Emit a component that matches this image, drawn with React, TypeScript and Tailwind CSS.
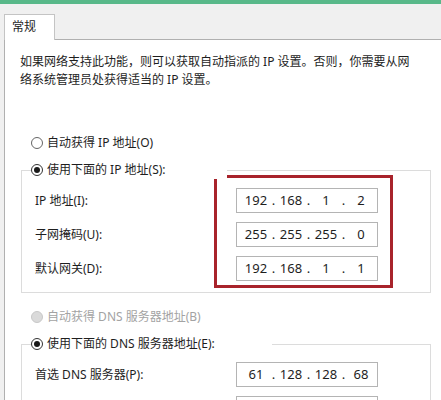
import React from "react";

const FONT = { fontFamily: '"Noto Sans", "Noto Sans CJK SC", sans-serif' };

type RadioState = "off" | "on" | "disabled";

function Radio({ state }: { state: RadioState }) {
  if (state === "disabled") {
    return <span className="w-[12px] h-[12px] rounded-full border border-[#c8c8c8] bg-[#dadada] shrink-0" />;
  }
  return (
    <span
      className={`w-[12px] h-[12px] rounded-full border bg-white shrink-0 flex items-center justify-center ${
        state === "on" ? "border-[#333]" : "border-[#666]"
      }`}
    >
      {state === "on" && <span className="w-[6px] h-[6px] rounded-full bg-[#1a1a1a]" />}
    </span>
  );
}

function RadioRow({ state, label }: { state: RadioState; label: string }) {
  return (
    <div
      className={`flex items-center h-[18px] gap-[4px] text-[12px] whitespace-nowrap ${
        state === "disabled" ? "text-[#a3a3a3]" : "text-[#1e1e1e]"
      }`}
    >
      <Radio state={state} />
      <span>{label}</span>
    </div>
  );
}

// parts empty -> blank box (only its top edge is in view)
function IpBox({ parts }: { parts?: string[] }) {
  return (
    <div className="w-[142px] h-[25px] border border-[#b4b4b4] bg-white flex items-center pl-[5px] text-[13px] text-[#1e1e1e]">
      {parts?.map((p, i) => (
        <React.Fragment key={i}>
          {i > 0 && <span className="w-[7px] text-center">.</span>}
          <span className="w-[28px] text-center">{p}</span>
        </React.Fragment>
      ))}
    </div>
  );
}

function FieldLabel({ children }: { children: React.ReactNode }) {
  return <div className="h-[25px] flex items-center text-[12px] text-[#1e1e1e] whitespace-nowrap">{children}</div>;
}

export default function App() {
  return (
    <div className="w-[441px] h-[400px] overflow-hidden bg-[#f0f0f0] flex flex-col" style={FONT}>
      <div className="h-[4px] bg-[#58b889] shrink-0" />

      {/* tab strip */}
      <div className="flex pl-[4px] pt-[10px] shrink-0">
        <div className="relative z-10 -mb-px w-[51px] h-[26px] border border-b-0 border-[#c4c4c4] bg-white pl-[7px] text-[12px] leading-[24px] text-[#1e1e1e]">
          常规
        </div>
      </div>

      {/* tab page */}
      <div className="flex-1 ml-[4px] bg-white border-l border-t border-[#b0b0b0] pt-[13px]">
        <div className="pl-[15px] text-[12px] leading-[18px] text-[#1e1e1e] whitespace-nowrap">
          <div>如果网络支持此功能，则可以获取自动指派的 IP 设置。否则，你需要从网</div>
          <div>络系统管理员处获得适当的 IP 设置。</div>
        </div>

        <div className="mt-[45px] ml-[26px]">
          <RadioRow state="off" label="自动获得 IP 地址(O)" />
        </div>

        <div className="relative mt-[18px] ml-[16px] w-[410px] h-[123px] border border-[#dcdcdc] flex">
          <div className="absolute -top-[10px] left-[9px] w-[196px] bg-white">
            <RadioRow state="on" label="使用下面的 IP 地址(S):" />
          </div>
          <div className="w-[192px] pl-[13px] pt-[17px] flex flex-col gap-[9px]">
            <FieldLabel>IP 地址(I):</FieldLabel>
            <FieldLabel>子网掩码(U):</FieldLabel>
            <FieldLabel>默认网关(D):</FieldLabel>
          </div>
          <div className="mt-[4px] w-[179px] h-[113px] border-[3px] border-[#a8232b] pl-[19px] pt-[10px] flex flex-col gap-[9px]">
            <IpBox parts={["192", "168", "1", "2"]} />
            <IpBox parts={["255", "255", "255", "0"]} />
            <IpBox parts={["192", "168", "1", "1"]} />
          </div>
        </div>

        <div className="mt-[15px] ml-[26px]">
          <RadioRow state="disabled" label="自动获得 DNS 服务器地址(B)" />
        </div>

        <div className="relative mt-[18px] ml-[16px] w-[410px] h-[120px] border border-[#dcdcdc] flex">
          <div className="absolute -top-[10px] left-[9px] w-[241px] bg-white">
            <RadioRow state="on" label="使用下面的 DNS 服务器地址(E):" />
          </div>
          <div className="w-[214px] pl-[13px] pt-[17px] flex flex-col gap-[9px]">
            <FieldLabel>首选 DNS 服务器(P):</FieldLabel>
          </div>
          <div className="pt-[17px] flex flex-col gap-[9px]">
            <IpBox parts={["61", "128", "128", "68"]} />
            <IpBox />
          </div>
        </div>
      </div>
    </div>
  );
}
